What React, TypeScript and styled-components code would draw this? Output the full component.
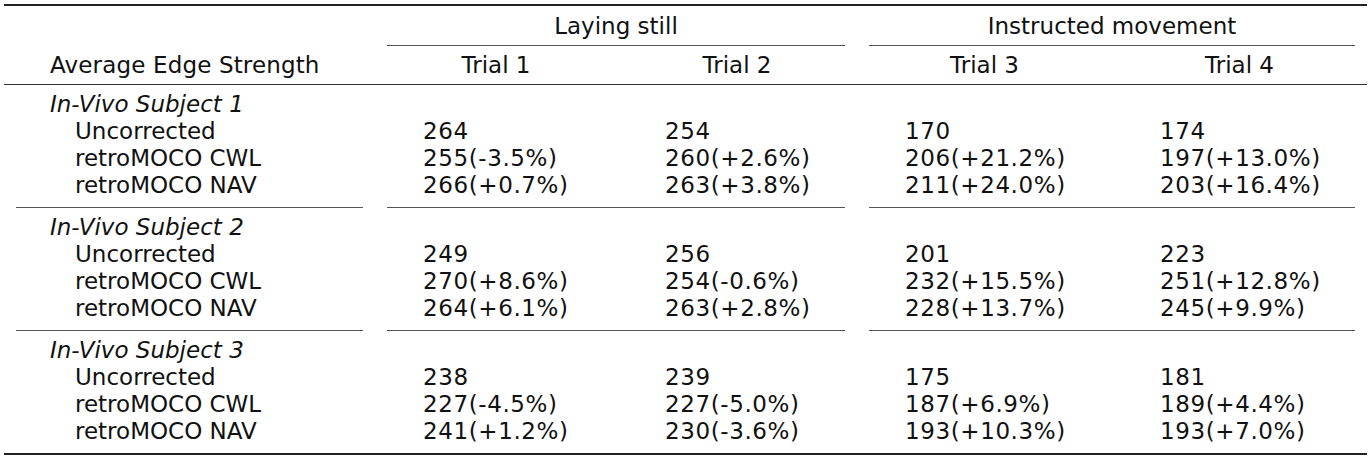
import React from "react";
import styled, { createGlobalStyle } from "styled-components";

const GlobalStyle = createGlobalStyle`
	html, body {
		margin: 0;
		padding: 0;
		background: #fff;
	}
	body {
		font-family: "DejaVu Sans", Verdana, sans-serif;
		font-size: 23px;
		color: #111;
	}
`;

const COLS = "371px 242px 240px 255px 255px";

const Table = styled.div`
	width: 1363px;
	margin: 4px 0 0 4px;
	border-top: 2px solid #222;
	border-bottom: 2px solid #222;
`;

const Head = styled.div`
	display: grid;
	grid-template-columns: ${COLS};
	grid-template-rows: 39px 1px 38px;
	border-bottom: 1px solid #333;
`;

const CornerLabel = styled.div`
	grid-column: 1;
	grid-row: 1 / 4;
	display: flex;
	align-items: center;
	align-self: end;
	height: 38px;
	padding-left: 46px;
	letter-spacing: 0.15px;
`;

const Spanner = styled.div<{ $col: number }>`
	grid-column: ${(p) => p.$col} / span 2;
	grid-row: 1;
	display: flex;
	align-items: center;
	justify-content: center;
`;

const SpannerRule = styled.div<{ $col: number }>`
	grid-column: ${(p) => p.$col} / span 2;
	grid-row: 2;
	margin: 0 12px;
	background: #555;
`;

const TrialHead = styled.div<{ $col: number }>`
	grid-column: ${(p) => p.$col};
	grid-row: 3;
	display: flex;
	align-items: center;
	justify-content: center;
`;

const Group = styled.div`
	padding: 6px 0 8px;
`;

const Row = styled.div`
	display: grid;
	grid-template-columns: ${COLS};
	height: 27px;
	line-height: 27px;
	white-space: nowrap;
`;

const RowLabel = styled.div<{ $sub?: boolean }>`
	padding-left: ${(p) => (p.$sub ? "71px" : "46px")};
	font-style: ${(p) => (p.$sub ? "normal" : "italic")};
`;

const Cell = styled.div`
	padding-left: 48px;
	letter-spacing: 0.6px;
`;

const GroupRule = styled.div`
	display: grid;
	grid-template-columns: 371px 482px 510px;
	height: 1px;

	span {
		margin: 0 12px;
		background: #555;
	}
`;

const groups = [
	{
		name: "In-Vivo Subject 1",
		rows: [
			["Uncorrected", "264", "254", "170", "174"],
			["retroMOCO CWL", "255(-3.5%)", "260(+2.6%)", "206(+21.2%)", "197(+13.0%)"],
			["retroMOCO NAV", "266(+0.7%)", "263(+3.8%)", "211(+24.0%)", "203(+16.4%)"],
		],
	},
	{
		name: "In-Vivo Subject 2",
		rows: [
			["Uncorrected", "249", "256", "201", "223"],
			["retroMOCO CWL", "270(+8.6%)", "254(-0.6%)", "232(+15.5%)", "251(+12.8%)"],
			["retroMOCO NAV", "264(+6.1%)", "263(+2.8%)", "228(+13.7%)", "245(+9.9%)"],
		],
	},
	{
		name: "In-Vivo Subject 3",
		rows: [
			["Uncorrected", "238", "239", "175", "181"],
			["retroMOCO CWL", "227(-4.5%)", "227(-5.0%)", "187(+6.9%)", "189(+4.4%)"],
			["retroMOCO NAV", "241(+1.2%)", "230(-3.6%)", "193(+10.3%)", "193(+7.0%)"],
		],
	},
];

const App = () => {
	return (
		<>
			<GlobalStyle />
			<Table>
				<Head>
					<CornerLabel>Average Edge Strength</CornerLabel>
					<Spanner $col={2}>Laying still</Spanner>
					<Spanner $col={4}>Instructed movement</Spanner>
					<SpannerRule $col={2} />
					<SpannerRule $col={4} />
					{[1, 2, 3, 4].map((n) => (
						<TrialHead key={n} $col={n + 1}>
							Trial {n}
						</TrialHead>
					))}
				</Head>
				{groups.map((g, gi) => (
					<React.Fragment key={g.name}>
						<Group>
							<Row>
								<RowLabel>{g.name}</RowLabel>
							</Row>
							{g.rows.map((r) => (
								<Row key={r[0]}>
									<RowLabel $sub>{r[0]}</RowLabel>
									{r.slice(1).map((v, i) => (
										<Cell key={i}>{v}</Cell>
									))}
								</Row>
							))}
						</Group>
						{gi < groups.length - 1 && (
							<GroupRule>
								<span />
								<span />
								<span />
							</GroupRule>
						)}
					</React.Fragment>
				))}
			</Table>
		</>
	);
};

export default App;
